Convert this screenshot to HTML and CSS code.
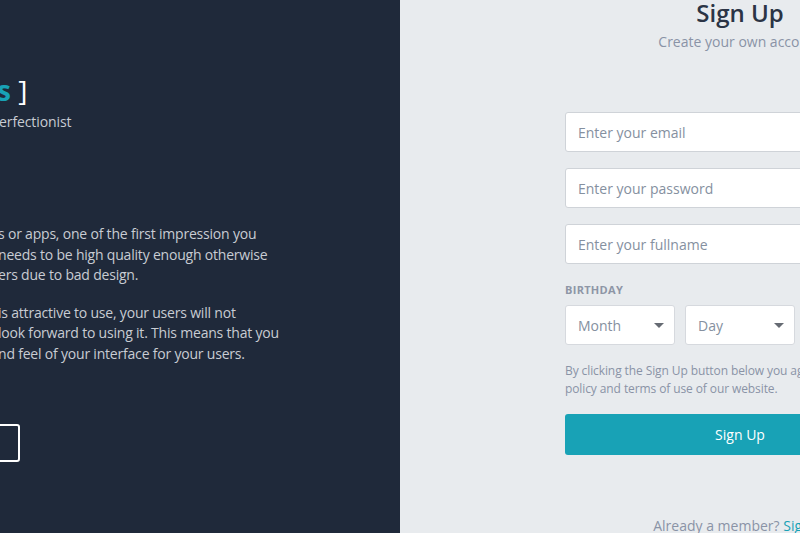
FILE: index.html
```html
<!DOCTYPE html>
<html lang="en">
<head>
<meta charset="utf-8">
<title>Sign Up</title>
<link rel="stylesheet" href="styles.css">
</head>
<body>
<div class="page">
  <section class="intro">
    <h1 class="brand"><span class="accent">s</span> ]</h1>
    <p class="tagline">erfectionist</p>
    <div class="copy">
      <p>s or apps, one of the first impression you<br>needs to be high quality enough otherwise<br>ers due to bad design.</p>
      <p>is attractive to use, your users will not<br>look forward to using it. This means that you<br>nd feel of your interface for your users.</p>
    </div>
    <a class="outline-btn" href="#"></a>
  </section>
  <section class="signup">
    <form class="form">
      <h2 class="title">Sign Up</h2>
      <p class="subtitle">Create your own account</p>
      <div class="fields">
        <input class="field" type="email" placeholder="Enter your email">
        <input class="field" type="password" placeholder="Enter your password">
        <input class="field" type="text" placeholder="Enter your fullname">
      </div>
      <div class="label">Birthday</div>
      <div class="birthday">
        <div class="select"><span>Month</span><i class="caret"></i></div>
        <div class="select"><span>Day</span><i class="caret"></i></div>
        <div class="select"><span>Year</span><i class="caret"></i></div>
      </div>
      <p class="terms">By clicking the Sign Up button below you agree to our privacy policy and terms of use of our website.</p>
      <button class="submit" type="button">Sign Up</button>
      <p class="member">Already a member? <a href="#">Sign In</a></p>
    </form>
  </section>
</div>
</body>
</html>
```
FILE: styles.css
```css
* { box-sizing: border-box; }
html, body { margin: 0; padding: 0; }
body {
  font-family: "Open Sans", "Noto Sans", sans-serif;
  overflow: hidden;
  height: 533px;
}
.page {
  display: flex;
  height: 533px;
}
.intro {
  width: 400px;
  flex: none;
  background: #1f293a;
  color: #c8ccd3;
  overflow: hidden;
  padding-top: 72px;
}
.brand {
  margin: 0 0 0 -3px;
  font-size: 28px;
  line-height: 36px;
  font-weight: 400;
  color: #ffffff;
}
.accent { color: #18a2b6; font-weight: 700; }
.tagline {
  margin: 4px 0 0 -1px;
  font-size: 14px;
  line-height: 20px;
  letter-spacing: -0.1px;
}
.copy {
  margin-top: 92px;
  margin-left: -2px;
  font-size: 14px;
  line-height: 20.5px;
  letter-spacing: -0.2px;
}
.copy p { margin: 0 0 17px; white-space: nowrap; }
.outline-btn {
  display: block;
  width: 120px;
  height: 38px;
  margin-top: 60px;
  margin-left: -100px;
  border: 2px solid #ffffff;
  border-radius: 3px;
}
.signup {
  width: 400px;
  flex: none;
  background: #e8ebee;
  overflow: hidden;
  padding-left: 165px;
}
.form {
  width: 350px;
  display: flex;
  flex-direction: column;
}
.title {
  margin: -2px 0 0;
  text-align: center;
  font-size: 24px;
  line-height: 30px;
  font-weight: 600;
  color: #2b3445;
}
.subtitle {
  margin: 4px 0 0;
  text-align: center;
  font-size: 14px;
  line-height: 20px;
  color: #8a93a6;
}
.fields {
  display: flex;
  flex-direction: column;
  gap: 16px;
  margin-top: 60px;
}
.field {
  height: 40px;
  width: 100%;
  border: 1px solid #cfd3d8;
  border-radius: 3px;
  background: #fff;
  padding: 0 12px;
  font-family: inherit;
  font-size: 14px;
  color: #333;
}
.field::placeholder { color: #8590a0; }
.label {
  margin-top: 19px;
  font-size: 11px;
  line-height: 14px;
  font-weight: 700;
  letter-spacing: 0.3px;
  text-transform: uppercase;
  color: #8e96a6;
}
.birthday {
  display: flex;
  gap: 10px;
  margin-top: 8px;
}
.select {
  width: 110px;
  height: 40px;
  background: #fff;
  border: 1px solid #d6d9de;
  border-radius: 3px;
  display: flex;
  align-items: center;
  justify-content: space-between;
  padding: 0 10px 0 12px;
  font-size: 14px;
  color: #8590a0;
}
.caret {
  width: 0;
  height: 0;
  border-left: 5px solid transparent;
  border-right: 5px solid transparent;
  border-top: 5px solid #666b73;
}
.terms {
  margin: 17px 0 0;
  font-size: 12px;
  line-height: 18px;
  color: #8a93a6;
  letter-spacing: -0.1px;
}
.submit {
  margin-top: 16px;
  height: 41px;
  width: 100%;
  border: 0;
  border-radius: 3px;
  background: #18a2b6;
  color: #fff;
  font-family: inherit;
  font-size: 14px;
}
.member {
  margin: 61px 0 0;
  text-align: center;
  font-size: 14px;
  line-height: 20px;
  color: #8a93a6;
}
.member a { color: #18a2b6; text-decoration: none; }
```
